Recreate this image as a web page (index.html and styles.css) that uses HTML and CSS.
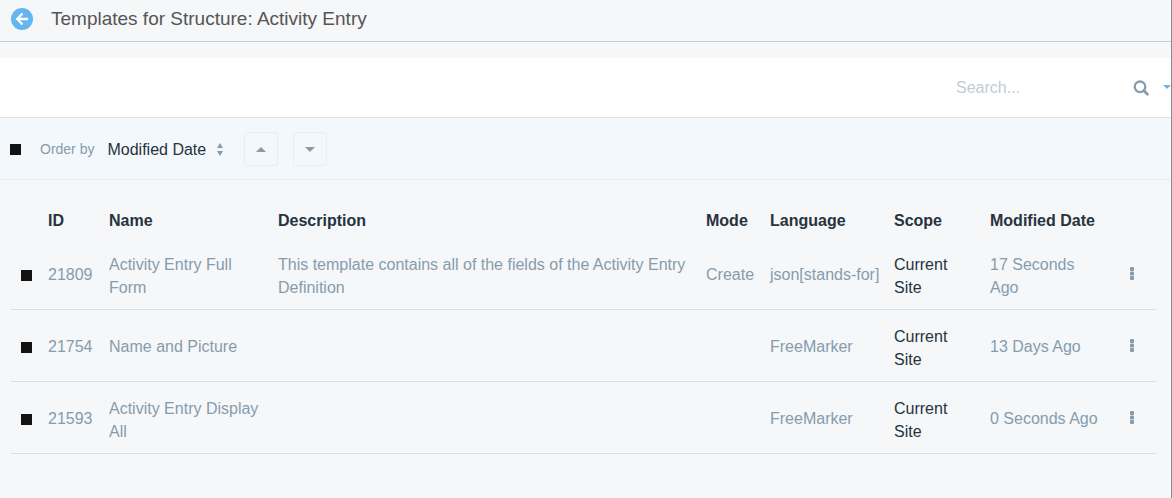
FILE: index.html
```html
<!DOCTYPE html>
<html lang="en">
<head>
<meta charset="utf-8">
<title>Templates for Structure: Activity Entry</title>
<link rel="stylesheet" href="styles.css">
</head>
<body>
<header class="header">
  <a class="back" href="#" aria-label="Back">
    <svg width="22" height="22" viewBox="0 0 22 22"><circle cx="11" cy="11" r="11" fill="#65b6f0"/><path d="M11.5 5.5 6.2 11l5.3 5.5M6.5 11H17" fill="none" stroke="#fff" stroke-width="2.3"/></svg>
  </a>
  <h1 class="title">Templates for Structure: Activity Entry</h1>
</header>
<form class="search" role="search">
  <input class="search-input" type="text" placeholder="Search..." aria-label="Search">
  <button class="icon-button" type="button" aria-label="Search">
    <svg width="16" height="16" viewBox="0 0 16 16" fill="none" stroke="#869cad"><circle cx="7" cy="6.8" r="5.3" stroke-width="2.3"/><path d="m11 10.8 3.4 3.4" stroke-width="2.8" stroke-linecap="round"/></svg>
  </button>
  <button class="icon-button" type="button" aria-label="Search options">
    <svg width="8" height="8" viewBox="0 0 8 8"><path d="M0 1h8L4 5z" fill="#65b6f0"/></svg>
  </button>
</form>
<div class="toolbar">
  <input class="check" type="checkbox" aria-label="Select all">
  <label class="order-label" for="order">Order by</label>
  <span class="order">
    <select class="order-select" id="order"><option>Modified Date</option></select>
    <svg width="6" height="13" viewBox="0 0 6 13" fill="#869cad"><path d="M3 0 6 5H0zM0 8h6l-3 5z"/></svg>
  </span>
  <button class="sort" type="button" aria-label="Ascending"><svg width="10" height="5" viewBox="0 0 10 5"><path d="M0 5 5 0l5 5z" fill="#869cad"/></svg></button>
  <button class="sort" type="button" aria-label="Descending"><svg width="10" height="5" viewBox="0 0 10 5"><path d="M0 0h10L5 5z" fill="#869cad"/></svg></button>
</div>
<main class="content">
  <table class="table">
    <colgroup><col class="c-check"><col class="c-id"><col class="c-name"><col><col class="c-mode"><col class="c-language"><col class="c-scope"><col class="c-date"><col class="c-menu"></colgroup>
    <thead>
      <tr><th></th><th>ID</th><th>Name</th><th>Description</th><th>Mode</th><th>Language</th><th>Scope</th><th>Modified Date</th><th></th></tr>
    </thead>
    <tbody>
      <tr>
        <td class="check-cell"><input class="check" type="checkbox" aria-label="Select 21809"></td>
        <td class="line"><a href="#">21809</a></td><td><a href="#">Activity Entry Full Form</a></td>
        <td><a href="#">This template contains all of the fields of the Activity Entry Definition</a></td>
        <td class="line"><a href="#">Create</a></td><td class="line"><a href="#">json[stands-for]</a></td><td>Current Site</td><td><a href="#">17 Seconds Ago</a></td>
        <td class="menu-cell"><button class="icon-button" type="button" aria-label="Actions for 21809"><svg width="4" height="13" viewBox="0 0 4 13" fill="#869cad"><rect width="4" height="4" rx="1"/><rect y="4.6" width="4" height="3.8" rx="1"/><rect y="9" width="4" height="4" rx="1"/></svg></button></td>
      </tr>
      <tr>
        <td class="check-cell"><input class="check" type="checkbox" aria-label="Select 21754"></td>
        <td class="line"><a href="#">21754</a></td><td class="line"><a href="#">Name and Picture</a></td><td></td><td></td>
        <td class="line"><a href="#">FreeMarker</a></td><td>Current Site</td><td class="line"><a href="#">13 Days Ago</a></td>
        <td class="menu-cell"><button class="icon-button" type="button" aria-label="Actions for 21754"><svg width="4" height="13" viewBox="0 0 4 13" fill="#869cad"><rect width="4" height="4" rx="1"/><rect y="4.6" width="4" height="3.8" rx="1"/><rect y="9" width="4" height="4" rx="1"/></svg></button></td>
      </tr>
      <tr>
        <td class="check-cell"><input class="check" type="checkbox" aria-label="Select 21593"></td>
        <td class="line"><a href="#">21593</a></td><td><a href="#">Activity Entry Display All</a></td><td></td><td></td>
        <td class="line"><a href="#">FreeMarker</a></td><td>Current Site</td><td class="line"><a href="#">0 Seconds Ago</a></td>
        <td class="menu-cell"><button class="icon-button" type="button" aria-label="Actions for 21593"><svg width="4" height="13" viewBox="0 0 4 13" fill="#869cad"><rect width="4" height="4" rx="1"/><rect y="4.6" width="4" height="3.8" rx="1"/><rect y="9" width="4" height="4" rx="1"/></svg></button></td>
      </tr>
    </tbody>
  </table>
</main>
</body>
</html>
```

FILE: styles.css
```css
* { box-sizing: border-box; }
body {
  margin: 0;
  min-height: 100vh;
  border-right: 1px solid #8b8b8b;
  background: #f5f7f9;
  color: #27333d;
  font: 16px/23px "Liberation Sans", Arial, sans-serif;
}
svg { display: block; }
a { color: #869cad; text-decoration: none; }
button, input, select { margin: 0; padding: 0; border: 0; background: none; font: inherit; }
.header {
  display: flex;
  align-items: center;
  gap: 18px;
  padding: 7px 11px 11px;
  border-bottom: 1px solid #c8cbcd;
}
.title { margin: 0; color: #555; font-size: 19px; font-weight: 400; line-height: 23px; }
.search {
  display: flex;
  align-items: center;
  justify-content: flex-end;
  gap: 14px;
  margin-top: 16px;
  padding: 18px 0;
  border-bottom: 1px solid #dfe4e7;
  background: #fff;
}
.search-input { width: 163px; height: 23px; color: #27333d; }
.search-input::placeholder { color: #bfcdd8; opacity: 1; }
.icon-button { display: inline-flex; }
.check {
  appearance: none;
  display: block;
  width: 11px;
  height: 11px;
  background: #121212;
}
.toolbar {
  display: flex;
  align-items: center;
  padding: 14px 10px 13px;
  border-bottom: 1px solid #e9edef;
  background: #f3f8fc;
}
.order-label { margin: 0 13px 0 19px; color: #869cad; font-size: 14px; }
.order { display: flex; align-items: center; gap: 11px; margin-right: 21px; }
.order-select { appearance: none; height: 23px; color: #27333d; }
.sort {
  display: flex;
  align-items: center;
  justify-content: center;
  width: 34px;
  height: 34px;
  border: 1px solid #e9eef2;
  border-radius: 3px;
}
.sort + .sort { margin-left: 15px; }
.content { padding: 21px 15px 44px 11px; }
.table { width: 100%; border-collapse: separate; border-spacing: 0; table-layout: fixed; }
.table th { padding: 8px 8px 6px; font-weight: 700; text-align: left; white-space: nowrap; }
.table td { padding: 15px 8px 10px; border-bottom: 1px solid #dadde0; vertical-align: middle; }
.table .line { padding: 12px 8px 10px; white-space: nowrap; }
.table .check-cell { padding: 13px 8px 10px 10px; }
.table .menu-cell { padding: 12px 10px 10px 8px; text-align: center; }
.c-check { width: 29px; }
.c-id { width: 61px; }
.c-name { width: 169px; }
.c-mode { width: 64px; }
.c-language { width: 124px; }
.c-scope { width: 96px; }
.c-date { width: 127px; }
.c-menu { width: 47px; }
```
